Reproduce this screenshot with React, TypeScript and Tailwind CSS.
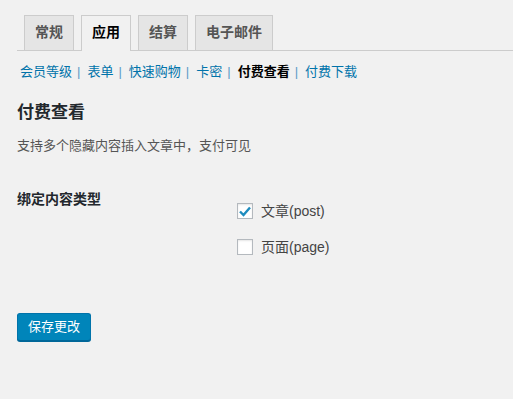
const font = {
  fontFamily: '"Liberation Sans", "Noto Sans CJK SC", sans-serif',
};

const tabs = ["常规", "应用", "结算", "电子邮件"];
const subLinks = ["会员等级", "表单", "快速购物", "卡密", "付费查看", "付费下载"];

function Checkbox({ checked }: { checked: boolean }) {
  return (
    <span className="w-[16px] h-[16px] border border-[#b4b9be] bg-white shadow-[inset_0_1px_2px_rgba(0,0,0,0.1)] flex items-center justify-center">
      {checked && (
        <svg width="14" height="14" viewBox="0 0 14 14">
          <path d="M2 7.5 L5.5 11 L12 3.5" fill="none" stroke="#1e8cbe" strokeWidth="2.4" />
        </svg>
      )}
    </span>
  );
}

export default function App() {
  return (
    <div className="min-h-[399px] w-full bg-[#f1f1f1] text-[#444] text-[13px]" style={font}>
      <div className="pl-[17px] pt-[15px]">
        <div className="flex gap-[7px] pl-[7px] border-b border-[#ccc]">
          {tabs.map((t, i) => (
            <div
              key={t}
              className={
                "h-[35px] px-[10px] border border-b-0 border-[#ccc] text-[14px] font-bold leading-[33px] " +
                (i === 1 ? "bg-[#f1f1f1] text-black -mb-px h-[36px]" : "bg-[#e5e5e5] text-[#555]")
              }
            >
              {t}
            </div>
          ))}
        </div>

        <div className="mt-[8px] flex items-center h-[26px] pl-[3px]">
          {subLinks.map((l, i) => (
            <span key={l} className="flex items-center">
              <span className={l === "付费查看" ? "text-black font-bold" : "text-[#0073aa]"}>{l}</span>
              {i < subLinks.length - 1 && <span className="ml-[5px] mr-[7px] text-[#5a9bc6]">|</span>}
            </span>
          ))}
        </div>

        <h2 className="mt-[16px] text-[17px] leading-[24px] font-bold text-[#23282d]">付费查看</h2>
        <p className="mt-[11px] leading-[20px] text-[#555]">支持多个隐藏内容插入文章中，支付可见</p>

        <div className="flex mt-[15px] text-[14px]">
          <div className="w-[220px] pt-[20px] leading-[17px] font-bold text-[#23282d]">绑定内容类型</div>
          <div className="pt-[32px] flex flex-col gap-[20px]">
            <label className="flex items-center gap-[8px] h-[16px]">
              <Checkbox checked />
              <span>文章(post)</span>
            </label>
            <label className="flex items-center gap-[8px] h-[16px]">
              <Checkbox checked={false} />
              <span>页面(page)</span>
            </label>
          </div>
        </div>

        <button className="mt-[58px] h-[28px] px-[10px] bg-[#0085ba] border border-[#0073aa] border-b-[#006799] rounded-[3px] shadow-[0_1px_0_#006799] text-white leading-[26px]">
          保存更改
        </button>
      </div>
    </div>
  );
}
